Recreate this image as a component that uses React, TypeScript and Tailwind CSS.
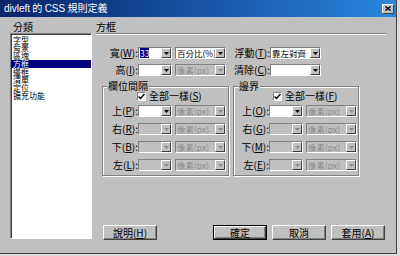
import React from 'react';

const sunken = 'border border-t-[#808080] border-l-[#808080] border-b-white border-r-white';
const raised = 'border border-t-white border-l-white border-r-[#404040] border-b-[#404040]';

const Mn = ({ t, k }: { t: string; k: string }) => (
  <>
    {t}(<span className="underline">{k}</span>)
  </>
);

const Arrow = ({ disabled = false }: { disabled?: boolean }) => (
  <div className={`flex h-full w-[10px] shrink-0 items-center justify-center bg-[#c0c0c0] ${raised}`}>
    <svg width="5" height="3" viewBox="0 0 5 3">
      <path d="M0 0h5L2.5 3z" fill={disabled ? '#8a8a8a' : '#000'} />
    </svg>
  </div>
);

type SelectProps = { width: string; text?: string; disabled?: boolean; selected?: boolean };

const Select = ({ width, text = '', disabled = false, selected = false }: SelectProps) => (
  <div className={`flex h-[12px] shrink-0 ${sunken} ${disabled ? 'bg-[#c0c0c0]' : 'bg-white'} ${width}`}>
    <div className="flex-1 overflow-hidden whitespace-nowrap pl-[1px] text-[8.5px] leading-[10px]">
      {selected ? (
        <span className="bg-[#000080] text-white">{text}</span>
      ) : (
        <span className={disabled ? 'text-[#8a8a8a]' : ''}>{text}</span>
      )}
    </div>
    <Arrow disabled={disabled} />
  </div>
);

const Check = () => (
  <div className={`flex h-[9px] w-[9px] items-center justify-center bg-white ${sunken}`}>
    <svg width="7" height="7" viewBox="0 0 7 7">
      <path d="M0.5 3.5L2.5 5.5L6.5 1" stroke="#000" strokeWidth="1.5" fill="none" />
    </svg>
  </div>
);

type GroupProps = {
  title: string;
  check: string;
  labels: [string, string][];
  width: string;
  checkPad: string;
};

const Group = ({ title, check, labels, width, checkPad }: GroupProps) => (
  <div className={`relative h-[90px] border border-[#808080] shadow-[inset_1px_1px_0_#fff,1px_1px_0_#fff] ${width}`}>
    <div className="absolute -top-[6px] left-[4px] bg-[#c0c0c0] px-[1px] text-[10px] leading-[10px]">{title}</div>
    <div className={`mt-[4px] flex h-[10px] items-center ${checkPad}`}>
      <Check />
      <span className="ml-[3px] text-[10px] leading-[10px]">
        <Mn t="全部一樣" k={check} />
      </span>
    </div>
    <div className="mt-[4px] flex flex-col gap-[6px]">
      {labels.map(([t, k], i) => (
        <div key={t} className="flex h-[12px] items-center">
          <span className="w-[35px] text-right text-[10px] leading-[12px]">
            <Mn t={t} k={k} />:
          </span>
          <Select width="w-[34px]" disabled={i > 0} />
          <div className="w-[3px]" />
          <Select width="w-[51px]" text="像素(px)" disabled />
        </div>
      ))}
    </div>
  </div>
);

const Btn = ({ children, isDefault = false }: { children: React.ReactNode; isDefault?: boolean }) => (
  <div className={`h-[15px] w-[54px] ${isDefault ? 'border border-black' : ''}`}>
    <div
      className={`flex h-full w-full items-center justify-center bg-[#c0c0c0] text-[10px] leading-[10px] shadow-[inset_-1px_-1px_0_#808080] ${raised}`}
    >
      {children}
    </div>
  </div>
);

const categories = ['字型', '背景', '區塊', '方框', '邊框', '清單', '定位', '擴充功能'];

export default function App() {
  return (
    <div className="h-[256px] w-[400px] bg-[#dcdcdc] font-['Noto_Sans_CJK_TC','Liberation_Sans',sans-serif] text-black">
      <div className="flex h-[254px] w-[397px] flex-col border-r border-b border-[#404040] bg-[#c0c0c0]">
        <div className="flex h-[17px] shrink-0 items-center justify-between bg-linear-to-r from-[#0a246a] to-[#2a86e0] pl-[4px] pr-[2px]">
          <span className="text-[10px] leading-[10px] text-white">
            <span className="font-['Liberation_Sans',sans-serif]">divleft</span> 的{' '}
            <span className="font-['Liberation_Sans',sans-serif]">CSS</span> 規則定義
          </span>
          <div className={`flex h-[10px] w-[12px] items-center justify-center bg-[#c0c0c0] ${raised}`}>
            <svg width="6" height="5" viewBox="0 0 6 5">
              <path d="M0.5 0.5L5.5 4.5M5.5 0.5L0.5 4.5" stroke="#000" strokeWidth="1.4" />
            </svg>
          </div>
        </div>

        <div className="flex pl-[10px] pt-[4px]">
          <div className="w-[82px]">
            <div className="h-[12px] pl-[3px] text-[10px] leading-[12px]">分類</div>
            <div className={`h-[206px] overflow-hidden bg-white pt-[2px] shadow-[inset_1px_1px_0_#404040] ${sunken}`}>
              {categories.map((c, i) => (
                <div
                  key={c}
                  className={`h-[8px] overflow-visible pl-[2px] text-[8px] leading-[8px] ${i === 3 ? 'bg-[#000080] text-white' : ''}`}
                >
                  {c}
                </div>
              ))}
            </div>
          </div>

          <div className="ml-[4px] w-[290px]">
            <div className="h-[12px] text-[10px] leading-[12px]">方框</div>
            <div className="h-[2px] border-t border-b border-t-[#808080] border-b-white" />

            <div className="mt-[12px] flex h-[12px] items-center">
              <span className="w-[42px] text-right text-[10px] leading-[12px]">
                <Mn t="寬" k="W" />:
              </span>
              <Select width="w-[34px]" text="33" selected />
              <div className="w-[3px]" />
              <Select width="w-[51px]" text="百分比(%)" />
              <span className="w-[44px] text-right text-[10px] leading-[12px]">
                <Mn t="浮動" k="T" />:
              </span>
              <Select width="w-[51px]" text="靠左對齊" />
            </div>

            <div className="mt-[5px] flex h-[12px] items-center">
              <span className="w-[42px] text-right text-[10px] leading-[12px]">
                <Mn t="高" k="I" />:
              </span>
              <Select width="w-[34px]" />
              <div className="w-[3px]" />
              <Select width="w-[51px]" text="像素(px)" disabled />
              <span className="w-[44px] text-right text-[10px] leading-[12px]">
                <Mn t="清除" k="C" />:
              </span>
              <Select width="w-[51px]" />
            </div>

            <div className="ml-[6px] mt-[10px] flex gap-[4px]">
              <Group
                title="欄位間隔"
                check="S"
                width="w-[127px]"
                checkPad="pl-[34px]"
                labels={[
                  ['上', 'P'],
                  ['右', 'R'],
                  ['下', 'B'],
                  ['左', 'L'],
                ]}
              />
              <Group
                title="邊界"
                check="F"
                width="w-[126px]"
                checkPad="pl-[39px]"
                labels={[
                  ['上', 'O'],
                  ['右', 'G'],
                  ['下', 'M'],
                  ['左', 'E'],
                ]}
              />
            </div>

            <div className="mt-[49px] flex">
              <div className="ml-[7px]">
                <Btn>
                  <Mn t="說明" k="H" />
                </Btn>
              </div>
              <div className="ml-[56px] flex gap-[5px]">
                <Btn isDefault>確定</Btn>
                <Btn>取消</Btn>
                <Btn>
                  <Mn t="套用" k="A" />
                </Btn>
              </div>
            </div>
          </div>
        </div>
      </div>
    </div>
  );
}
